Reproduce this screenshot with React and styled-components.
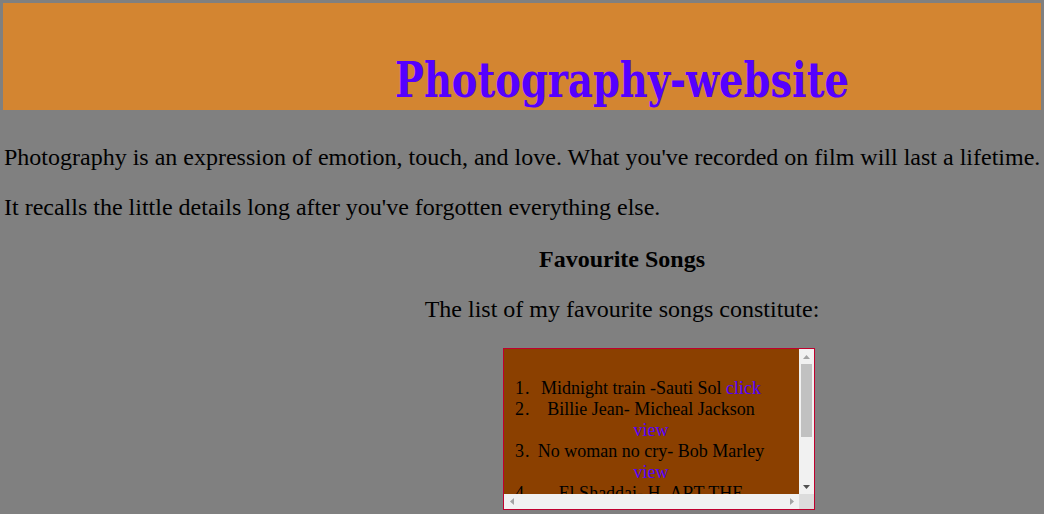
import React from 'react';
import styled, { createGlobalStyle } from 'styled-components';

const GlobalStyle = createGlobalStyle`
  html {
    overflow: hidden;
  }
  body {
    margin: 3px;
    background-color: #808080;
    font-family: "Liberation Serif", "Times New Roman", serif;
    color: #000;
  }
`;

const Header = styled.header`
  background-color: #d38531;
  height: 107px;
  margin-right: -3px;
  display: flex;
  align-items: flex-end;
`;

// the condensed face is not installed, so narrow the regular bold instead
const Title = styled.h1`
  margin: 0 0 6px 392px;
  font-family: "DejaVu Serif Condensed", "DejaVu Serif", serif;
  font-weight: bold;
  font-size: 48px;
  line-height: 1;
  color: #5500ff;
  white-space: nowrap;
  transform: scaleX(0.89);
  transform-origin: left bottom;
`;

const Intro = styled.p`
  font-size: 24px;
  margin: ${props => props.first ? '34px' : '24px'} 0 0 1px;
  line-height: 26px;
  white-space: nowrap;
`;

const Songs = styled.section`
  padding-left: 200px;
  text-align: center;
`;

const SongsHeading = styled.h3`
  font-size: 24px;
  margin: 26px 0 0;
  line-height: 26px;
`;

const SongsLead = styled.p`
  font-size: 24px;
  margin: 24px 0 0;
  line-height: 26px;
`;

const ScrollFrame = styled.div`
  width: 310px;
  height: 160px;
  margin: 26px 0 0 300px;
  border: 1px solid #c0002e;
  background-color: #8b4000;
  display: grid;
  grid-template-columns: 1fr 15px;
  grid-template-rows: 1fr 15px;
  text-align: center;
`;

const Viewport = styled.div`
  overflow: hidden;
`;

const VBar = styled.div`
  background-color: #f1f1f1;
  display: flex;
  flex-direction: column;
`;

const HBar = styled.div`
  background-color: #f1f1f1;
  display: flex;
  justify-content: space-between;
`;

const Corner = styled.div`
  background-color: #dcdcdc;
`;

const ArrowButton = styled.div`
  width: 15px;
  height: 15px;
  flex: none;
  display: flex;
  align-items: center;
  justify-content: center;
`;

const Track = styled.div`
  flex: 1;
`;

const Thumb = styled.div`
  height: 73px;
  margin: 0 2px;
  background-color: #c1c1c1;
`;

const SongList = styled.ol`
  margin: 29px 0 0;
  padding: 0 33px 0 32px;
  font-size: 18px;
  line-height: 21px;
  color: #000;

  li::marker {
    letter-spacing: 1px;
  }
`;

const SongLink = styled.a`
  color: #5500ff;
  text-decoration: none;
`;

const arrows = {
  up: '0,4 3.5,0 7,4',
  down: '0,0 7,0 3.5,4',
  left: '4,0 4,7 0,3.5',
  right: '0,0 0,7 4,3.5',
};

const Arrow = ({ dir, color }) => {
  const vertical = dir === 'up' || dir === 'down';
  return (
    <svg width={vertical ? 7 : 4} height={vertical ? 4 : 7} viewBox={vertical ? '0 0 7 4' : '0 0 4 7'}>
      <polygon points={arrows[dir]} fill={color} />
    </svg>
  );
};

const songs = [
  { title: 'Midnight train -Sauti Sol', link: 'click' },
  { title: 'Billie Jean- Micheal Jackson', link: 'view' },
  { title: 'No woman no cry- Bob Marley', link: 'view' },
  { title: 'El Shaddai- H_ART THE BAND', link: 'view' },
  { title: 'Thriller- Micheal Jackson', link: 'view' },
];

const App = () => {
  return (
    <>
      <GlobalStyle />
      <Header>
        <Title>Photography-website</Title>
      </Header>
      <Intro first>
        Photography is an expression of emotion, touch, and love. What you've recorded on film will last a lifetime.
      </Intro>
      <Intro>It recalls the little details long after you've forgotten everything else.</Intro>
      <Songs>
        <SongsHeading>Favourite Songs</SongsHeading>
        <SongsLead>The list of my favourite songs constitute:</SongsLead>
        <ScrollFrame>
          <Viewport>
            <SongList>
              {songs.map(song => (
                <li key={song.title}>
                  {song.title} <SongLink href="#">{song.link}</SongLink>
                </li>
              ))}
            </SongList>
          </Viewport>
          <VBar>
            <ArrowButton><Arrow dir="up" color="#a3a3a3" /></ArrowButton>
            <Track><Thumb /></Track>
            <ArrowButton><Arrow dir="down" color="#505050" /></ArrowButton>
          </VBar>
          <HBar>
            <ArrowButton><Arrow dir="left" color="#a3a3a3" /></ArrowButton>
            <ArrowButton><Arrow dir="right" color="#a3a3a3" /></ArrowButton>
          </HBar>
          <Corner />
        </ScrollFrame>
      </Songs>
    </>
  );
};

export default App;
